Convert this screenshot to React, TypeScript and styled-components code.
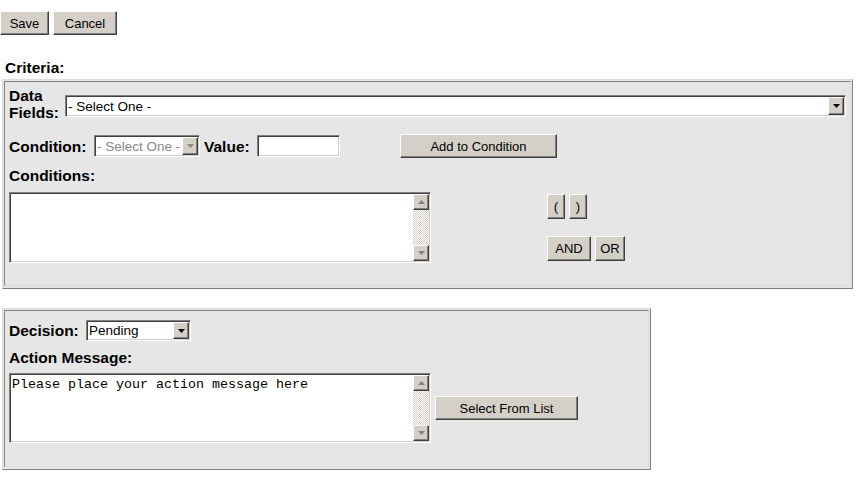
import React from "react";
import styled, { createGlobalStyle, css } from "styled-components";

const GlobalStyle = createGlobalStyle`
  body {
    margin: 0;
    background: #fff;
    font-family: "Liberation Sans", Arial, sans-serif;
    color: #000;
  }
`;

const raised = css`
  background: #d4d0c8;
  border: 1px solid;
  border-color: #fff #404040 #404040 #fff;
  box-shadow: inset -1px -1px #808080;
`;

const sunken = css`
  border: 1px solid;
  border-color: #808080 #fff #fff #808080;
  box-shadow: inset 1px 1px #404040, inset -1px -1px #d4d0c8;
`;

const Page = styled.div`
  padding-top: 11px;
`;

const Toolbar = styled.div`
  display: flex;
  gap: 4px;
`;

const Button = styled.button<{ $w: number; $h?: number }>`
  ${raised}
  box-sizing: border-box;
  flex: none;
  width: ${(p) => p.$w}px;
  height: ${(p) => p.$h ?? 24}px;
  padding: 0;
  font: 13px "Liberation Sans", Arial, sans-serif;
  color: #000;
  display: flex;
  align-items: center;
  justify-content: center;
`;

const Label = styled.div<{ $w?: number }>`
  font-size: 15.5px;
  font-weight: 700;
  line-height: 17px;
  flex: none;
  white-space: nowrap;
  ${(p) => p.$w && `width: ${p.$w}px;`}
`;

const Heading = styled(Label)`
  margin: 24px 0 3px 5px;
`;

const Panel = styled.div<{ $w: number; $top?: number }>`
  box-sizing: border-box;
  width: ${(p) => p.$w}px;
  margin: ${(p) => p.$top ?? 0}px 0 0 2px;
  padding: 1px 1px 2px 1px;
  background: #e6e6e6;
  border: 1px solid;
  border-color: #dcdcdc #808080 #808080 #dcdcdc;
`;

const PanelBody = styled.div<{ $top: number; $bottom: number }>`
  border: 1px solid;
  border-color: #808080 #dcdcdc #dcdcdc #808080;
  padding: ${(p) => p.$top}px 4px ${(p) => p.$bottom}px 4px;
`;

const Row = styled.div<{ $top?: number; $h?: number; $align?: string }>`
  display: flex;
  align-items: ${(p) => p.$align ?? "center"};
  margin-top: ${(p) => p.$top ?? 0}px;
  ${(p) => p.$h && `height: ${p.$h}px;`}
`;

const BlockLabel = styled(Label)<{ $top: number }>`
  margin-top: ${(p) => p.$top}px;
`;

const SelectBox = styled.div<{ $w?: number; $h: number; $mt?: number; $disabled?: boolean }>`
  ${sunken}
  box-sizing: border-box;
  height: ${(p) => p.$h}px;
  ${(p) => (p.$w ? `width: ${p.$w}px; flex: none;` : `flex: 1;`)}
  margin-top: ${(p) => p.$mt ?? 0}px;
  padding: 1px;
  background: #fff;
  display: flex;
  font-size: 13.5px;
  color: ${(p) => (p.$disabled ? "#8a8a8a" : "#000")};
`;

const SelectText = styled.span`
  flex: 1;
  padding-left: 1px;
  display: flex;
  align-items: center;
  white-space: nowrap;
  overflow: hidden;
`;

const ArrowBox = styled.span`
  ${raised}
  box-sizing: border-box;
  width: 16px;
  flex: none;
  display: flex;
  align-items: center;
  justify-content: center;
`;

const TextInput = styled.input<{ $w: number }>`
  ${sunken}
  box-sizing: border-box;
  width: ${(p) => p.$w}px;
  height: 22px;
  padding: 1px 3px;
  margin: 0;
  background: #fff;
  font: 13px "Liberation Sans", Arial, sans-serif;
  outline: none;
`;

const TextBox = styled.div<{ $h: number }>`
  ${sunken}
  box-sizing: border-box;
  flex: none;
  width: 422px;
  height: ${(p) => p.$h}px;
  padding: 1px;
  background: #fff;
  display: flex;
`;

const TextArea = styled.textarea`
  flex: 1;
  border: none;
  outline: none;
  resize: none;
  overflow: hidden;
  margin: 0;
  padding: 2px 1px;
  background: transparent;
  font: 13.33px/15px "Liberation Mono", "Courier New", monospace;
  color: #000;
`;

const ScrollBar = styled.div`
  width: 16px;
  flex: none;
  display: flex;
  flex-direction: column;
  justify-content: space-between;
  background: repeating-conic-gradient(#d4d0c8 0 25%, #fff 0 50%) 0 0 / 2px 2px;
`;

const ScrollArrow = styled.div`
  ${raised}
  box-sizing: border-box;
  width: 16px;
  height: 16px;
  display: flex;
  align-items: center;
  justify-content: center;
`;

const LogicColumn = styled.div`
  display: flex;
  flex-direction: column;
  gap: 17px;
  margin: 2px 0 0 116px;
  align-self: flex-start;
`;

const ButtonRow = styled.div<{ $gap: number }>`
  display: flex;
  gap: ${(p) => p.$gap}px;
`;

const Triangle: React.FC<{ up?: boolean; color: string }> = ({ up, color }) => (
  <svg width="7" height="4" viewBox="0 0 7 4">
    <path d={up ? "M3.5 0L7 4H0z" : "M0 0h7L3.5 4z"} fill={color} />
  </svg>
);

type SelectProps = { text: string; w?: number; h: number; mt?: number; disabled?: boolean };

const Select: React.FC<SelectProps> = ({ text, w, h, mt, disabled }) => (
  <SelectBox $w={w} $h={h} $mt={mt} $disabled={disabled}>
    <SelectText>{text}</SelectText>
    <ArrowBox>
      <Triangle color={disabled ? "#8a8a8a" : "#000"} />
    </ArrowBox>
  </SelectBox>
);

const MultiText: React.FC<{ h: number; value?: string }> = ({ h, value }) => (
  <TextBox $h={h}>
    <TextArea readOnly defaultValue={value ?? ""} />
    <ScrollBar>
      <ScrollArrow>
        <Triangle up color="#808080" />
      </ScrollArrow>
      <ScrollArrow>
        <Triangle color="#808080" />
      </ScrollArrow>
    </ScrollBar>
  </TextBox>
);

const App: React.FC = () => {
  return (
    <>
      <GlobalStyle />
      <Page>
        <Toolbar>
          <Button $w={49}>Save</Button>
          <Button $w={64}>Cancel</Button>
        </Toolbar>

        <Heading>Criteria:</Heading>

        <Panel $w={851}>
          <PanelBody $top={5} $bottom={22}>
            <Row $align="flex-start">
              <Label $w={56}>
                Data
                <br />
                Fields:
              </Label>
              <Select text="- Select One -" h={22} mt={8} />
            </Row>
            <Row $top={13} $h={24}>
              <Label $w={85}>Condition:</Label>
              <Select text="- Select One -" w={106} h={22} disabled />
              <Label $w={53} style={{ marginLeft: 4 }}>
                Value:
              </Label>
              <TextInput $w={83} />
              <Button $w={157} style={{ marginLeft: 60 }}>
                Add to Condition
              </Button>
            </Row>
            <BlockLabel $top={9}>Conditions:</BlockLabel>
            <Row $top={8} $align="flex-start">
              <MultiText h={71} />
              <LogicColumn>
                <ButtonRow $gap={4}>
                  <Button $w={18} $h={25}>(</Button>
                  <Button $w={18} $h={25}>)</Button>
                </ButtonRow>
                <ButtonRow $gap={4}>
                  <Button $w={44} $h={25}>AND</Button>
                  <Button $w={30} $h={25}>OR</Button>
                </ButtonRow>
              </LogicColumn>
            </Row>
          </PanelBody>
        </Panel>

        <Panel $w={649} $top={19}>
          <PanelBody $top={9} $bottom={23}>
            <Row $h={21}>
              <Label $w={77}>Decision:</Label>
              <Select text="Pending" w={105} h={21} />
            </Row>
            <BlockLabel $top={8}>Action Message:</BlockLabel>
            <Row $top={7}>
              <MultiText h={70} value="Please place your action message here" />
              <Button $w={143} style={{ marginLeft: 4 }}>
                Select From List
              </Button>
            </Row>
          </PanelBody>
        </Panel>
      </Page>
    </>
  );
};

export default App;
